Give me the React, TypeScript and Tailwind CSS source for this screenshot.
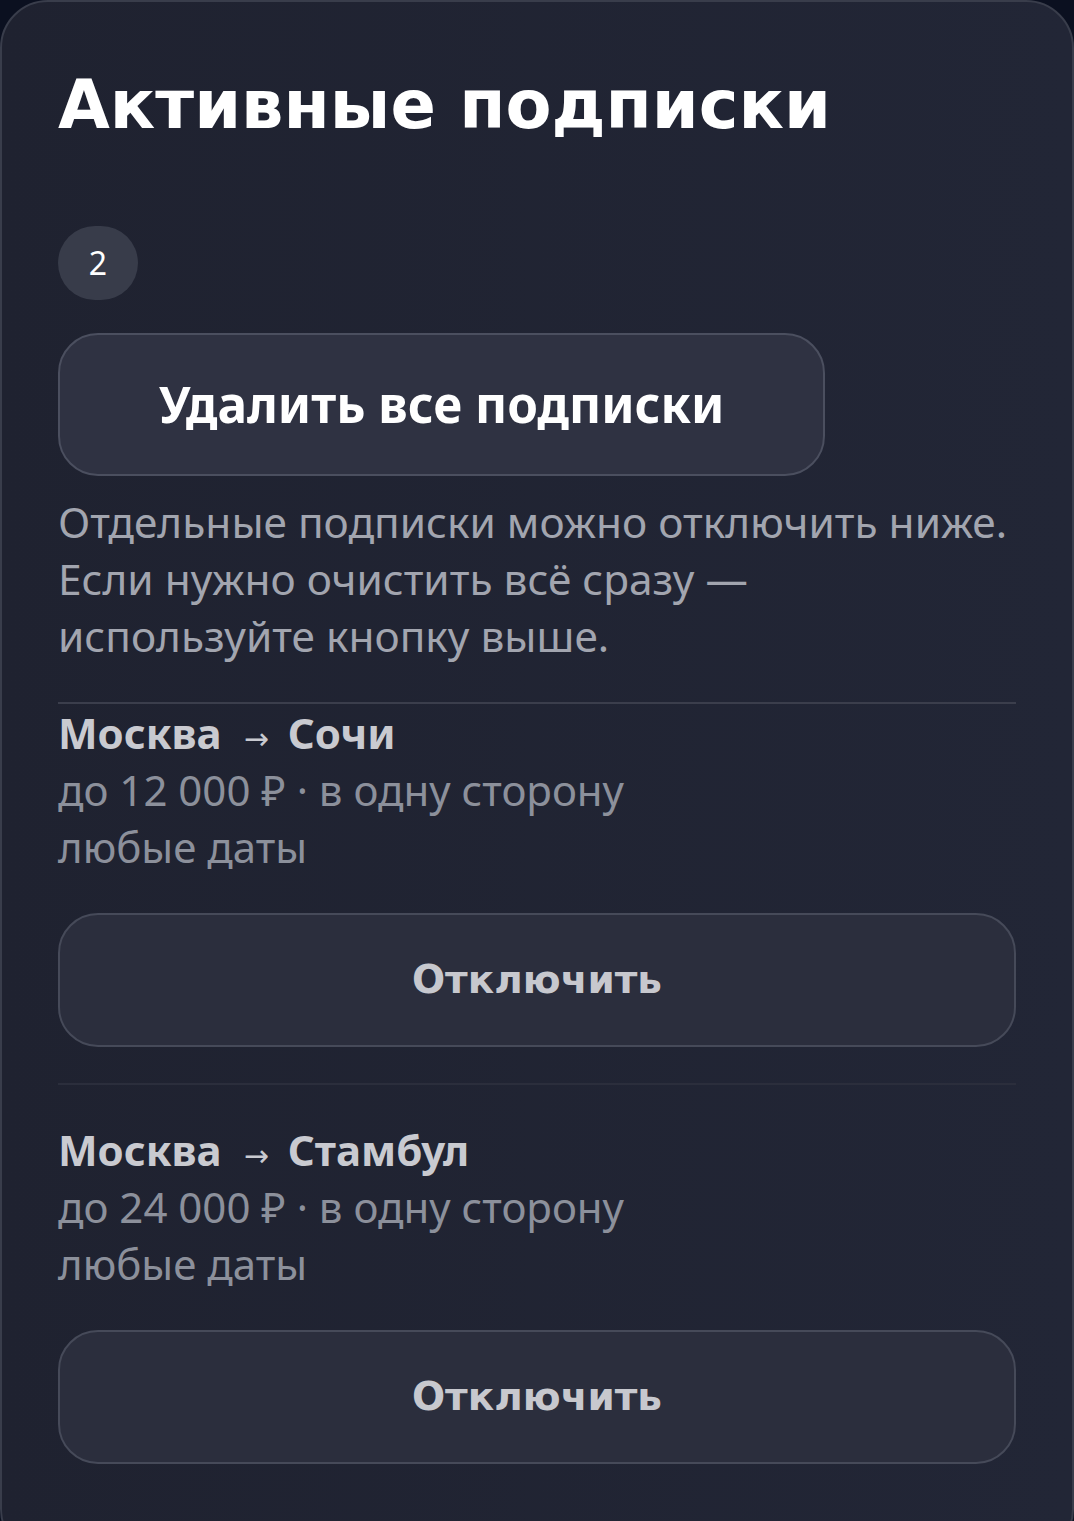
import React from 'react';

type Subscription = {
  id: number;
  from: string;
  to: string;
  price: string;
  dates: string;
};

const subscriptions: Subscription[] = [
  { id: 1, from: 'Москва', to: 'Сочи', price: 'до 12 000 ₽ · в одну сторону', dates: 'любые даты' },
  { id: 2, from: 'Москва', to: 'Стамбул', price: 'до 24 000 ₽ · в одну сторону', dates: 'любые даты' },
];

function SubscriptionItem({ item, first }: { item: Subscription; first: boolean }) {
  return (
    <div className={first ? 'pb-9' : 'border-t-2 border-[#2b2e3c] py-9'}>
      <div className="text-[42px] leading-[57px]">
        <div className="h-[57px] font-bold text-[#c9cad0]">
          {item.from}
          <span className="ml-[22px] mr-[19px] font-['DejaVu_Sans'] text-[30px] font-normal">→</span>
          {item.to}
        </div>
        <div className="h-[57px] text-[#8c909b]">{item.price}</div>
        <div className="h-[57px] text-[#8c909b]">{item.dates}</div>
      </div>
      <button className="mt-[38px] flex h-[134px] w-full items-center justify-center rounded-[40px] border-2 border-[#464a59] bg-[#2b2e3d] font-['DejaVu_Sans'] text-[39px] font-bold text-[#c7c8ce]">
        Отключить
      </button>
    </div>
  );
}

export default function App() {
  return (
    <div className="min-h-screen bg-[#0b1020] font-['Noto_Sans',sans-serif]">
      <div className="min-h-[1521px] rounded-[48px] border-2 border-[#393d4b] bg-gradient-to-r from-[#1f2230] to-[#222636] px-14 pt-[55px] pb-[55px]">
        {/* Header */}
        <h1 className="font-['DejaVu_Sans',sans-serif] text-[67px] font-bold leading-[96px] text-white">
          Активные подписки
        </h1>

        <div className="mt-[73px] flex h-[74px] w-[80px] items-center justify-center rounded-full bg-[#383c4a] text-[32px] text-white">
          2
        </div>

        <button className="mt-[33px] flex h-[143px] w-[767px] items-center justify-center rounded-[40px] border-2 border-[#4b4f5f] bg-[#2f3242] text-[49.5px] font-bold text-white">
          Удалить все подписки
        </button>

        <p className="mt-[17px] text-[42.4px] leading-[57px] text-[#a2a5af]">
          Отдельные подписки можно отключить ниже. Если нужно очистить всё сразу —
          <br />
          используйте кнопку выше.
        </p>

        {/* List */}
        <div className="mt-[38px] border-t-2 border-[#3b3e4c]">
          {subscriptions.map((s, i) => (
            <SubscriptionItem key={s.id} item={s} first={i === 0} />
          ))}
        </div>
      </div>
    </div>
  );
}
